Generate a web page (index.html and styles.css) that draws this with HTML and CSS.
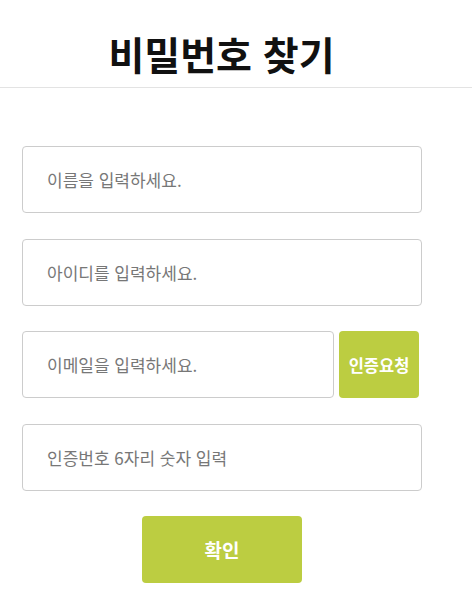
FILE: index.html
```html
<!DOCTYPE html>
<html lang="ko">
<head>
<meta charset="utf-8">
<title>비밀번호 찾기</title>
<link rel="stylesheet" href="styles.css">
</head>
<body>
<header class="page-header">
  <h1 class="title">비밀번호 찾기</h1>
</header>
<main class="wrap">
  <form class="form">
    <input class="field" type="text" placeholder="이름을 입력하세요.">
    <input class="field" type="text" placeholder="아이디를 입력하세요.">
    <div class="row">
      <input class="field field-email" type="text" placeholder="이메일을 입력하세요.">
      <button class="btn-auth" type="button">인증요청</button>
    </div>
    <input class="field" type="text" placeholder="인증번호 6자리 숫자 입력">
    <div class="actions">
      <button class="btn-confirm" type="button">확인</button>
    </div>
  </form>
</main>
</body>
</html>
```
FILE: styles.css
```css
* { box-sizing: border-box; }
html, body { margin: 0; padding: 0; background: #fff; }
body {
  font-family: "Noto Sans CJK KR", "Noto Sans", sans-serif;
  width: 475px;
}
.page-header {
  border-bottom: 1px solid #e3e3e3;
  padding: 27px 0 8px;
  width: 472px;
}
.title {
  margin: 0;
  width: 443px;
  text-align: center;
  font-size: 39px;
  line-height: 52px;
  font-weight: 700;
  color: #111;
}
.wrap {
  width: 443px;
  padding: 58px 22px 0;
}
.form {
  display: flex;
  flex-direction: column;
  gap: 25.5px;
  width: 400px;
}
.field {
  display: block;
  width: 400px;
  height: 67px;
  border: 1px solid #cccccc;
  border-radius: 4px;
  padding: 0 24px;
  font-family: "Noto Sans CJK KR", "Noto Sans", sans-serif;
  font-size: 17px;
  color: #333;
  background: #fff;
  outline: none;
}
.field::placeholder { color: #777; }
.row {
  display: flex;
  gap: 5px;
}
.field-email { width: 312px; }
.btn-auth {
  width: 80px;
  height: 67px;
  border: none;
  border-radius: 4px;
  background: #bccd41;
  color: #fff;
  font-family: "Noto Sans CJK KR", sans-serif;
  font-weight: 700;
  font-size: 16.5px;
  padding: 0;
}
.actions {
  display: flex;
  justify-content: center;
}
.btn-confirm {
  width: 160px;
  height: 67px;
  border: none;
  border-radius: 4px;
  background: #bccd41;
  color: #fff;
  font-family: "Noto Sans CJK KR", sans-serif;
  font-weight: 700;
  font-size: 19px;
  padding: 0;
}
```
